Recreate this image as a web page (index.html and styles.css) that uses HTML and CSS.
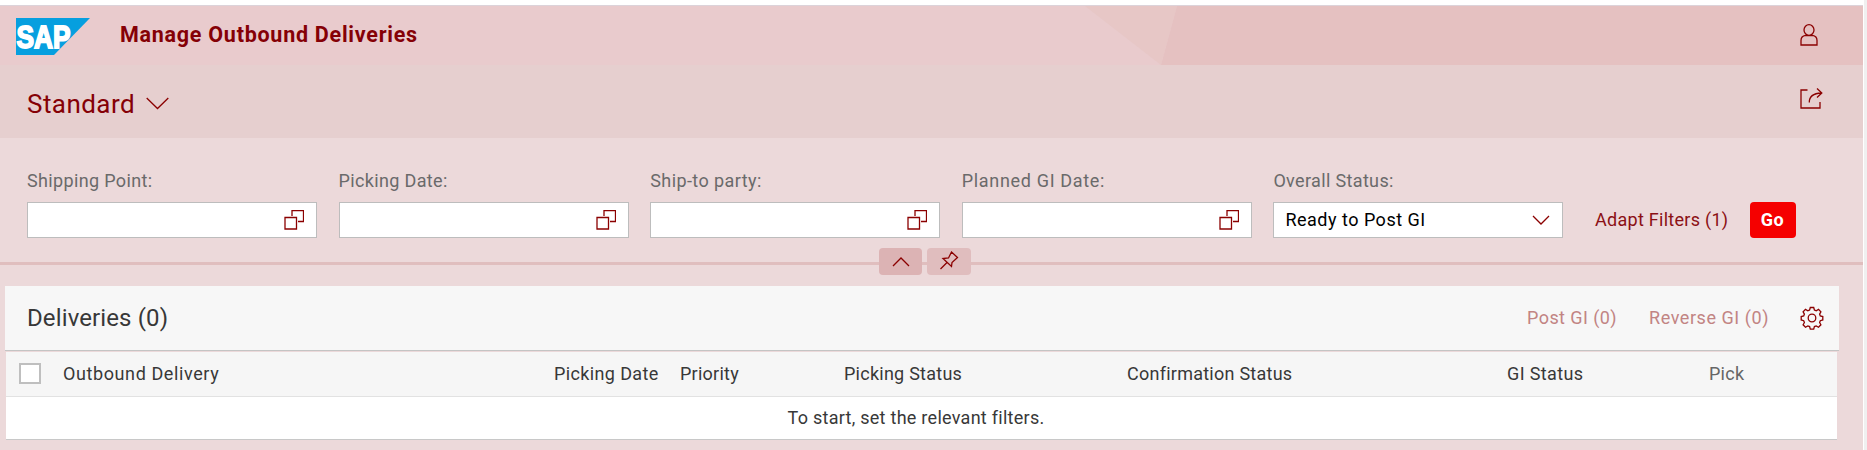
FILE: index.html
```html
<!DOCTYPE html>
<html lang="en">
<head>
    <meta charset="UTF-8">
    <meta name="viewport" content="width=device-width, initial-scale=1.0">
    <title>Manage Outbound Deliveries</title>
    <link rel="stylesheet" href="styles.css">
</head>
<body>
    <svg class="symbols" width="0" height="0">
        <symbol id="value-help" viewBox="0 0 20 20">
            <path d="M8 6V0.500h11.500v11h-5.500M1 7.500h11.500v11.500H1z"/>
        </symbol>
    </svg>
    <div class="page">
        <!-- shell bar -->
        <header class="shell">
            <svg class="shell-bg" viewBox="0 0 1863 59" preserveAspectRatio="none">
                <path d="M1085 0L1161 59L1177 0z" fill="#e7c7c6"/>
                <path d="M1177 0L1161 59H1863V0z" fill="#e5c1c1"/>
            </svg>
            <svg class="logo" width="74" height="37" viewBox="0 0 74 37">
                <path d="M0 0H74L38 37H0z" fill="#069fdf"/>
                <text x="0.500" y="30" textLength="54" lengthAdjust="spacingAndGlyphs">SAP</text>
            </svg>
            <h1>Manage Outbound Deliveries</h1>
            <svg class="icon user" width="18" height="22" viewBox="0 0 18 22">
                <ellipse cx="9" cy="6" rx="5" ry="5.300"/>
                <path d="M1 21V16.500Q1 12 5.500 11.300Q9 12 12.500 11.300Q17 12 17 16.500V21z"/>
            </svg>
        </header>

        <!-- variant -->
        <div class="variant">
            <h2>Standard</h2>
            <svg class="icon chevron" width="23" height="13" viewBox="0 0 23 13">
                <path d="M0.700 1L11.500 11.500L22.300 1"/>
            </svg>
            <svg class="icon share" width="23" height="21" viewBox="0 0 23 21">
                <path d="M7.500 2H1V20H20V14M9.300 14.500Q9 5.500 21.500 5M17 0.500L21.800 5L17 9.500"/>
            </svg>
        </div>

        <!-- filter bar -->
        <div class="filters">
            <div class="field">
                <label class="l1">Shipping Point:</label>
                <div class="input"><svg class="icon" width="20" height="20"><use href="#value-help"/></svg></div>
            </div>
            <div class="field">
                <label class="l2">Picking Date:</label>
                <div class="input"><svg class="icon" width="20" height="20"><use href="#value-help"/></svg></div>
            </div>
            <div class="field">
                <label class="l3">Ship-to party:</label>
                <div class="input"><svg class="icon" width="20" height="20"><use href="#value-help"/></svg></div>
            </div>
            <div class="field">
                <label class="l4">Planned GI Date:</label>
                <div class="input"><svg class="icon" width="20" height="20"><use href="#value-help"/></svg></div>
            </div>
            <div class="field">
                <label class="l5">Overall Status:</label>
                <div class="input select">
                    <span>Ready to Post GI</span>
                    <svg class="icon" width="18" height="10" viewBox="0 0 18 10"><path d="M1 1L9 9L17 1"/></svg>
                </div>
            </div>
            <a class="adapt">Adapt Filters (1)</a>
            <button class="go">Go</button>
        </div>

        <div class="divider">
            <div class="toggles">
                <button class="toggle up">
                    <svg class="icon" width="18" height="10" viewBox="0 0 18 10"><path d="M1 9L9 1L17 9"/></svg>
                </button>
                <button class="toggle pin">
                    <svg class="icon" width="20" height="20" viewBox="0 0 20 20">
                        <path d="M1.500 18L8 11.500M4 7.500L12.500 15.500L13 11.500L18.500 6.500L12.500 1L9.500 7z"/>
                    </svg>
                </button>
            </div>
        </div>

        <!-- table -->
        <div class="toolbar">
            <h2>Deliveries (0)</h2>
            <span class="action post">Post GI (0)</span>
            <span class="action reverse">Reverse GI (0)</span>
            <svg class="icon gear" width="24" height="24" viewBox="0 0 24 24">
                <circle cx="12" cy="12" r="3.800"/>
                <path d="M10.300 1.500h3.400l.7 2.500 1.800.7 2.300-1.300 2.400 2.400-1.300 2.300.7 1.800 2.500.7v3.400l-2.500.7-.7 1.800 1.300 2.300-2.400 2.400-2.300-1.300-1.800.7-.7 2.500h-3.400l-.7-2.500-1.800-.7-2.300 1.300-2.400-2.400 1.300-2.300-.7-1.800-2.500-.7v-3.400l2.500-.7.7-1.800-1.300-2.300 2.400-2.400 2.300 1.300 1.800-.7z"/>
            </svg>
        </div>
        <div class="table">
            <div class="row head">
                <span class="checkbox"></span>
                <span class="c1">Outbound Delivery</span>
                <span class="c2">Picking Date</span>
                <span class="c3">Priority</span>
                <span class="c4">Picking Status</span>
                <span class="c5">Confirmation Status</span>
                <span class="c6">GI Status</span>
                <span class="c7">Pick</span>
            </div>
            <div class="empty"><span>To start, set the relevant filters.</span></div>
        </div>
    </div>
</body>
</html>
```
FILE: styles.css
```css
*{
    box-sizing: border-box;
}
body{
    margin: 0;
    height: 450px;
    overflow: hidden;
    background: #f0f0f0;
    font-family: Roboto, "Liberation Sans", sans-serif;
    font-size: 18px;
    color: #383838;
}
.symbols{
    position: absolute;
}
.page{
    width: 1864px;
    height: 450px;
    padding-top: 5px;
    background: linear-gradient(#fff, #fff) 0 0 / 100% 5px no-repeat, #ecd9da;
    border-right: 1px solid #fff;
}
h1, h2{
    margin: 0;
    font-weight: normal;
    white-space: nowrap;
}
.icon{
    display: block;
    flex: none;
    fill: none;
    stroke: #8b0000;
    stroke-width: 1.300;
}
/* shell bar */
.shell{
    position: relative;
    display: flex;
    align-items: flex-start;
    height: 60px;
    padding: 13px 45px 0 16px;
    border-top: 1px solid #dcd3da;
    background: #e9cbcd;
}
.shell-bg{
    position: absolute;
    left: 0;
    top: 0;
    width: 100%;
    height: 59px;
}
.shell > .logo, .shell > h1, .shell > .user{
    position: relative;
}
.logo{
    margin-top: -1px;
}
.logo text{
    font: bold 31px "Liberation Sans", sans-serif;
    fill: #fff;
    stroke: #fff;
    stroke-width: 1.800;
}
.shell h1{
    margin-left: 30px;
    line-height: 31px;
    font-size: 21.500px;
    font-weight: bold;
    letter-spacing: 0.740px;
    color: #850006;
}
.user{
    margin: 5px 0 0 auto;
}
/* variant */
.variant{
    display: flex;
    height: 73px;
    padding: 0 40px 0 27px;
    background: #e6cfcf;
}
.variant h2{
    line-height: 78px;
    font-size: 26px;
    letter-spacing: 0.450px;
    color: #850006;
}
.chevron{
    margin: 32px 0 0 11px;
}
.share{
    margin: 23px 0 0 auto;
}
/* filter bar */
.filters{
    display: flex;
    gap: 21.600px;
    height: 124px;
    padding: 31px 0 0 27px;
}
.field{
    width: 290px;
}
.field label{
    display: block;
    height: 33px;
    line-height: 24px;
    letter-spacing: 0.350px;
    color: #6a6a6a;
}
.field .l3{
    letter-spacing: 0.420px;
}
.field .l4{
    letter-spacing: 0.670px;
}
.input{
    display: flex;
    align-items: center;
    justify-content: flex-end;
    height: 36px;
    padding-right: 12px;
    border: 1px solid #bdbdbd;
    background: #fff;
}
.select{
    justify-content: space-between;
    padding-left: 11px;
    color: #000;
}
.select span{
    margin-top: -2px;
    letter-spacing: 0.500px;
}
.adapt{
    margin: 33px 0 0 10px;
    width: 133px;
    line-height: 35px;
    letter-spacing: 0.280px;
    color: #8b1014;
    white-space: nowrap;
}
.go{
    margin: 33px 0 0 0;
    width: 46px;
    height: 36px;
    padding: 0 0 1px;
    border: none;
    border-radius: 4px;
    background: #f50000;
    font: bold 18px Roboto, sans-serif;
    letter-spacing: 0.500px;
    color: #fff;
}
.divider{
    position: relative;
    height: 3px;
    margin-bottom: 21px;
    background: #e0bebe;
}
/* the two buttons sit on the line */
.toggles{
    position: absolute;
    left: 879px;
    top: -14px;
    display: flex;
    gap: 5px;
}
.toggle{
    display: flex;
    justify-content: center;
    width: 43px;
    height: 27px;
    padding: 9px 0 0;
    border: none;
    border-radius: 4px;
    background: #dcb3b4;
}
.pin{
    width: 44px;
    padding: 3px 0 0;
    background: #e0bdbe;
}
/* table */
.toolbar{
    display: flex;
    align-items: center;
    width: 1834px;
    height: 65px;
    margin-left: 5px;
    padding: 0 15px 0 22px;
    border-bottom: 1px solid #c4c4c4;
    background: #f7f7f7;
}
.toolbar h2{
    margin-right: auto;
    font-size: 24px;
    letter-spacing: 0.120px;
}
.action{
    margin: -2px 32px 0 0;
    letter-spacing: 0.430px;
    color: #c28483;
}
.reverse{
    margin-right: 31px;
    letter-spacing: 0.550px;
}
.table{
    width: 1831px;
    margin: 1px 0 0 6px;
    border-bottom: 1px solid #c8c8c8;
    background: #fff;
}
.row{
    display: grid;
    grid-template-columns: 44px 491px 126px 164px 283px 380px 202px 1fr;
    align-items: center;
    height: 45px;
    padding: 0 0 2px 13px;
    border-bottom: 1px solid #e2e2e2;
    background: #f6f6f6;
    letter-spacing: 0.250px;
    white-space: nowrap;
}
.checkbox{
    width: 22px;
    height: 21px;
    border: 2px solid #bfbfbf;
    background: #fff;
}
.c1{
    letter-spacing: 0.600px;
}
.c2, .c6{
    letter-spacing: 0.370px;
}
.c7{
    color: #666;
}
.empty{
    height: 42px;
    padding-right: 11px;
    line-height: 42px;
    letter-spacing: 0.270px;
    text-align: center;
}
```
